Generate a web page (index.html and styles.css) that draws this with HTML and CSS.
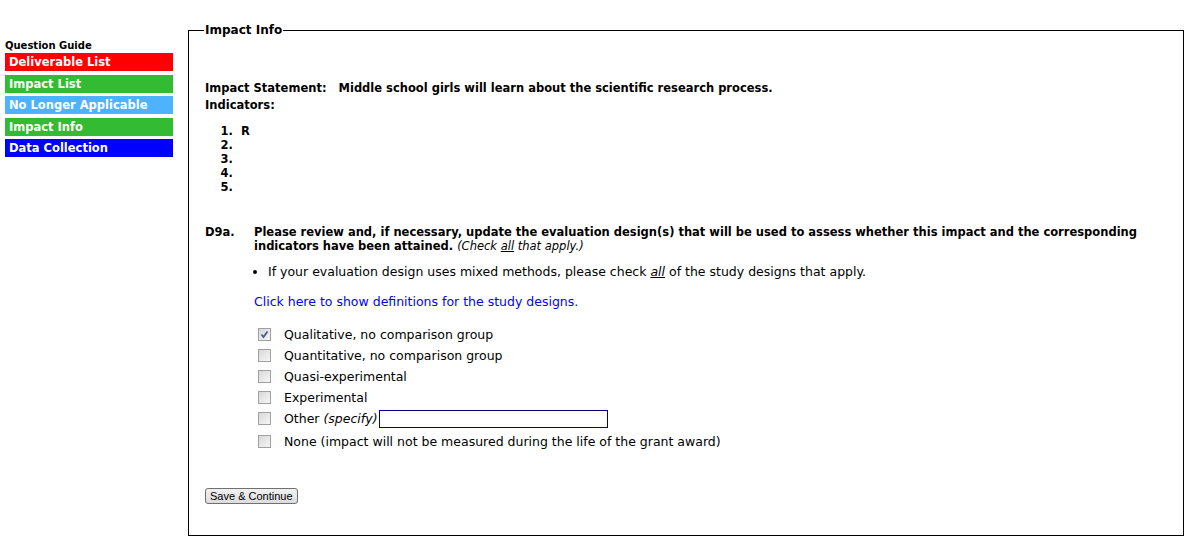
FILE: index.html
```html
<!DOCTYPE html>
<html>
<head>
	<meta charset="UTF-8">
	<title>Impact Info</title>
	<link rel="stylesheet" href="styles.css">
</head>
<body>
	<div class="page">
		<div class="guide">
			<div class="guide-title">Question Guide</div>
			<a class="guide-item red" href="#">Deliverable List</a>
			<a class="guide-item green" href="#">Impact List</a>
			<a class="guide-item sky" href="#">No Longer Applicable</a>
			<a class="guide-item green" href="#">Impact Info</a>
			<a class="guide-item blue" href="#">Data Collection</a>
		</div>

		<fieldset class="main">
			<legend>Impact Info</legend>

			<div class="statement">
				<span class="label">Impact Statement:</span>
				<span>Middle school girls will learn about the scientific research process.</span>
			</div>
			<div class="label">Indicators:</div>

			<ol class="indicators">
				<li>R</li>
				<li></li>
				<li></li>
				<li></li>
				<li></li>
			</ol>

			<div class="question">
				<div class="qnum">D9a.</div>
				<div class="qbody">
					<div class="qtext">Please review and, if necessary, update the evaluation design(s) that will be used to assess whether this impact and the corresponding<br>indicators have been attained. <i class="note">(Check <u>all</u> that apply.)</i></div>
					<ul class="hint">
						<li>If your evaluation design uses mixed methods, please check <i><u>all</u></i> of the study designs that apply.</li>
					</ul>
					<a class="deflink" href="#">Click here to show definitions for the study designs.</a>

					<div class="options">
						<label class="opt"><input type="checkbox" checked><span>Qualitative, no comparison group</span></label>
						<label class="opt"><input type="checkbox"><span>Quantitative, no comparison group</span></label>
						<label class="opt"><input type="checkbox"><span>Quasi-experimental</span></label>
						<label class="opt"><input type="checkbox"><span>Experimental</span></label>
						<label class="opt opt-other"><input type="checkbox"><span>Other <i>(specify)</i></span><input type="text" class="specify"></label>
						<label class="opt"><input type="checkbox"><span>None (impact will not be measured during the life of the grant award)</span></label>
					</div>
				</div>
			</div>

			<button type="button" class="save">Save &amp; Continue</button>
		</fieldset>
	</div>
</body>
</html>
```

FILE: styles.css
```css
body {
	margin: 0;
	background-color: #fff;
	font-family: "DejaVu Sans", Verdana, sans-serif;
	font-size: 12.5px;
	color: #000;
}

.page {
	display: flex;
	align-items: flex-start;
	padding: 23px 6px 0 5px;
}

.guide {
	width: 168px;
	margin-top: 17px;
	flex-shrink: 0;
}

.guide-title {
	font-size: 10px;
	font-weight: bold;
	line-height: 12px;
	margin-bottom: 1px;
}

.guide-item {
	display: block;
	height: 18px;
	line-height: 18px;
	margin-bottom: 3.5px;
	padding-left: 4px;
	color: #fff;
	font-weight: bold;
	font-size: 11.5px;
	text-decoration: none;
}

.red { background-color: #ff0000; }
.green { background-color: #33bb33; }
.sky { background-color: #4db2ff; }
.blue { background-color: #0000ff; }

.main {
	flex: 1;
	margin: 0 0 0 15px;
	border: 1px solid #000;
	padding: 0 16px 31px 16px;
	box-sizing: border-box;
}

.main legend {
	font-weight: bold;
	font-size: 12px;
	padding: 0 1px;
	margin-left: -1px;
	line-height: 14px;
}

.label {
	font-weight: bold;
	font-size: 11.5px;
}

.statement {
	margin-top: 41px;
	font-weight: bold;
	font-size: 11.5px;
	line-height: 20px;
}

.statement .label {
	margin-right: 8px;
}

.indicators {
	margin: 12px 0 0 0;
	padding-left: 36px;
	font-weight: bold;
	font-size: 11.5px;
	line-height: 14px;
}

.indicators li::marker {
	content: counter(list-item) ".  ";
}

.question {
	display: flex;
	margin-top: 31px;
}

.qnum {
	width: 49px;
	font-weight: bold;
	font-size: 11.5px;
	line-height: 14px;
	flex-shrink: 0;
}

.qtext {
	font-weight: bold;
	font-size: 11.5px;
	line-height: 14px;
}

.note {
	font-weight: normal;
	font-size: 11.5px;
}

.hint {
	margin: 12px 0 0 0;
	padding-left: 14px;
	line-height: 14px;
}

.deflink {
	display: block;
	margin-top: 16px;
	color: #0000ff;
	text-decoration: none;
	line-height: 14px;
}

.options {
	margin-top: 15px;
}

.opt {
	display: flex;
	align-items: center;
	height: 21px;
	padding-left: 4px;
}

.opt-other {
	margin-bottom: 2px;
}

.opt input[type="checkbox"] {
	appearance: none;
	width: 13px;
	height: 13px;
	margin: 0 13px 0 0;
	border: 1px solid #a0a0a0;
	background: linear-gradient(135deg, #d8d8d8, #f6f6f6);
	box-sizing: border-box;
}

.opt input[type="checkbox"]:checked {
	background-image: url("data:image/svg+xml;utf8,<svg xmlns='http://www.w3.org/2000/svg' viewBox='0 0 11 11'><path d='M2.5 5.5 L4.5 8 L8.5 2.5' fill='none' stroke='%234a5a9a' stroke-width='1.8'/></svg>"), linear-gradient(135deg, #d8d8d8, #f6f6f6);
}

.specify {
	width: 229px;
	height: 18px;
	margin-left: 1px;
	border: 1px solid #000080;
	padding: 0;
	box-sizing: border-box;
}

.save {
	margin-top: 36px;
	font-family: "Liberation Sans", Arial, sans-serif;
	font-size: 11px;
	padding: 1px 4px;
	border: 1px solid #707070;
	border-radius: 3px;
	background: linear-gradient(#f2f2f2, #dcdcdc);
}
```
